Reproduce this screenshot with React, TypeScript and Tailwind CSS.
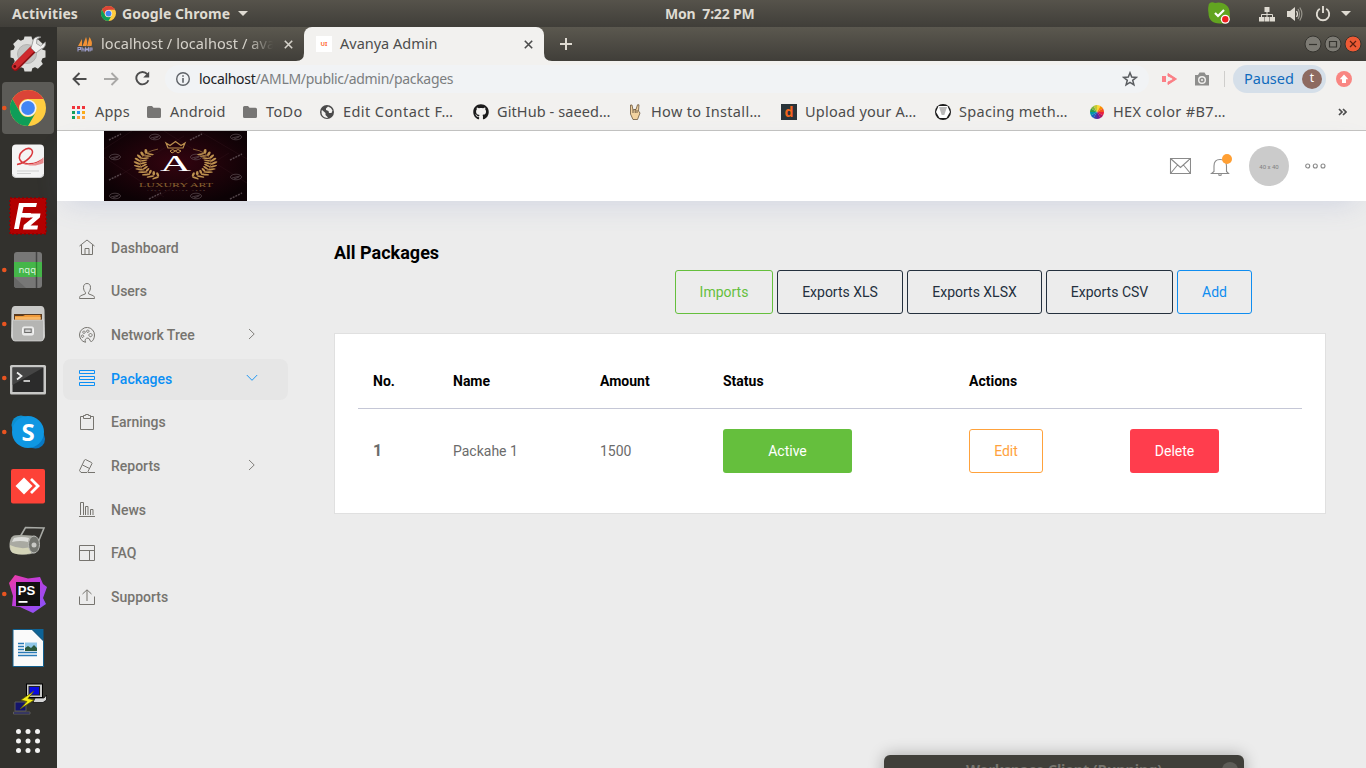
import React from "react";
import { FaGithub } from "react-icons/fa";

const UI = "font-['Noto_Sans',sans-serif]";

function ChromeLogo({ size }: { size: number }) {
  return (
    <svg width={size} height={size} viewBox="-18 -18 36 36" className="block shrink-0">
      <circle r="18" fill="#ffcd40" />
      <path d="M-15.6 -9A18 18 0 0 1 15.6 -9H0A9 9 0 0 0 -7.8 4.5Z" fill="#db4437" />
      <path d="M-15.6 -9A18 18 0 0 0 0 18L7.8 4.5A9 9 0 0 1 -7.8 4.5Z" fill="#0f9d58" />
      <circle r="8.6" fill="#f1f1f1" />
      <circle r="6.9" fill="#4285f4" />
    </svg>
  );
}

function TopBar() {
  return (
    <div className={`flex h-[27px] w-full shrink-0 items-center bg-linear-to-b from-[#56534b] to-[#403e39] text-[14px] font-bold text-[#dfdbd2] ${UI}`}>
      <span className="ml-3 w-[89px] whitespace-nowrap tracking-[0.1px]">Activities</span>
      <ChromeLogo size={15} />
      <span className="ml-1.5 w-[116px] whitespace-nowrap tracking-[0.05px]">Google Chrome</span>
      <svg width="10" height="5" viewBox="0 0 10 5"><path d="M0 0H10L5 5Z" fill="#dfdbd2" /></svg>
      <span className="ml-[417px] w-[543px] whitespace-pre tracking-[-0.200px]">Mon  7:22 PM</span>
      <svg width="22" height="23" viewBox="1208 2 22 23" className="shrink-0">
        <path d="M1208.5 6C1208.5 2.5 1212 1.5 1215 3C1222 1 1230 5 1229.7 13C1231 19 1227 24 1221 23.5C1213 24 1208.500 20 1208.500 13C1208 10 1208 8 1208.500 6Z" fill="#62a420" />
        <path d="M1215 13L1218 16L1224 10" fill="none" stroke="#fff" strokeWidth="2.200" />
        <circle cx="1225.300" cy="19.300" r="4.500" fill="#fff" />
        <circle cx="1225.300" cy="19.300" r="3.200" fill="#ef1f1f" />
      </svg>
      <svg width="16" height="16" viewBox="0 0 16 16" className="ml-[29px] shrink-0" fill="#dfdbd2">
        <path d="M5.500 1h5v5h-5zM0 11h5v4.500H0zM5.500 11h5v4.500h-5zM11 11h5v4.500h-5z" />
        <path d="M8 5V11M2.500 11V8.500H13.500V11" fill="none" stroke="#dfdbd2" />
      </svg>
      <svg width="16" height="14" viewBox="0 0 16 14" className="ml-3 shrink-0">
        <path d="M0 4H3L8 0V14L3 10H0Z" fill="#dfdbd2" />
        <path d="M9.500 4Q11.500 7 9.500 10" fill="none" stroke="#dfdbd2" strokeWidth="1.300" />
        <path d="M11 2Q14 7 11 12M12.800 .500Q17 7 12.800 13.500" fill="none" stroke="#98958c" strokeWidth="1.200" />
      </svg>
      <svg width="16" height="16" viewBox="0 0 16 16" className="ml-[12px] shrink-0">
        <path d="M4.800 2.800A6.200 6.200 0 1 0 11.200 2.800M8 0V7" fill="none" stroke="#dfdbd2" strokeWidth="1.900" />
      </svg>
      <svg width="10" height="5" viewBox="0 0 10 5" className="ml-[10px] shrink-0"><path d="M0 0H10L5 5Z" fill="#dfdbd2" /></svg>
    </div>
  );
}

function DockItem({ y, h = 54, running, children }: { y: number; h?: number; running?: boolean; children: React.ReactNode }) {
  return (
    <svg width="57" height={h} viewBox={`0 ${y} 57 ${h}`} className="block shrink-0">
      {children}
      {running && <circle cx="4.300" cy={y + 27} r="2.300" fill="#e95420" />}
    </svg>
  );
}

const teeth = [0, 45, 90, 135, 180, 225, 270, 315];
const gridDots = [0, 1, 2, 3, 4, 5, 6, 7, 8];

function Dock() {
  return (
    <div className="flex w-[57px] shrink-0 flex-col bg-[#32312d]">
      <DockItem y={27}>
        {teeth.map((a) => (
          <path key={a} d="M24.500 36.500H31.500L33.500 44H22.500Z" fill="#dededc" transform={`rotate(${a} 28 54)`} />
        ))}
        <circle cx="28" cy="54" r="15" fill="#dededc" />
        <circle cx="27" cy="54" r="9.500" fill="#c3c3c1" stroke="#b2b2b0" />
        <path d="M15.500 67L32.500 50" stroke="#8c1115" strokeWidth="7.500" strokeLinecap="round" />
        <path d="M15 66.500L32 49.500" stroke="#cf2a2e" strokeWidth="6" strokeLinecap="round" />
        <path d="M31 48L36 53L41 49Q46 48 45.500 42L40.500 46L36.500 43.500L37 39L41 37Q33 35.500 32.500 43Z" fill="#f1f1f0" stroke="#8d8d8b" strokeWidth=".8" />
        <circle cx="14.800" cy="66.500" r="1.400" fill="#5c0b0e" />
      </DockItem>
      <DockItem y={81} running>
        <rect x="2" y="82" width="52" height="52" rx="4" fill="#5c5b57" />
        <g transform="translate(28 108)">
          <circle r="18" fill="#ffcd40" />
          <path d="M-15.600 -9A18 18 0 0 1 15.600 -9H0A9 9 0 0 0 -7.800 4.500Z" fill="#db4437" />
          <path d="M-15.600 -9A18 18 0 0 0 0 18L7.800 4.500A9 9 0 0 1 -7.800 4.500Z" fill="#0f9d58" />
          <circle r="8.600" fill="#f1f1f1" />
          <circle r="6.900" fill="#4285f4" />
        </g>
      </DockItem>
      <DockItem y={135}>
        <rect x="12" y="144.500" width="32" height="33" rx="4" fill="#f4f4f4" />
        <path d="M12.500 174Q12.500 177.500 16 177.500H40Q43.500 177.500 43.500 174" stroke="#c9c9c9" fill="none" />
        <path d="M17 164.500C26 163 35.500 154 31.500 149.500C27 146 17 153 20 160C24 166.500 36 164 43 159" fill="none" stroke="#d9373c" strokeWidth="1.500" />
        <path d="M22 162.500C29 166 38 164.500 43.500 157V163C38 166 28 167 22 162.500Z" fill="#e98c8e" />
        <path d="M17 171H39M17 173.500H31" stroke="#cfcfcf" />
      </DockItem>
      <DockItem y={189}>
        <rect x="10" y="198" width="36" height="36" fill="#b30000" stroke="#8e0000" strokeWidth="1.500" strokeDasharray="2 2" />
        <path d="M19 203H37L36 207H23.500L22.200 213H31L30 217.500H21L18.800 229H14Z" fill="#fff" />
        <path d="M26 213.500H40.500L39.800 217.500L30.500 225.500H38L37.300 229.500H23L23.800 225L33 217.500H25.200Z" fill="#fff" />
      </DockItem>
      <DockItem y={243} running>
        <rect x="14" y="252" width="28" height="36" rx="3" fill="#777776" />
        <path d="M14 277L26 288H17Q14 288 14 285Z" fill="#686867" />
        <path d="M36.500 252V288" stroke="#444" strokeWidth="1.500" />
        <rect x="14" y="262" width="28" height="15" fill="#45b649" />
        <path d="M36.500 262V277" stroke="#2d8532" strokeWidth="1.300" />
        <text x="18.500" y="272.500" fontSize="9.500" fill="#d9f2da" fontFamily="Noto Sans, sans-serif">nqq</text>
      </DockItem>
      <DockItem y={297} running>
        <path d="M15 306H41Q44 306 44.500 310L45 336Q45 340 41 340H15Q11 340 11 336L11.500 310Q12 306 15 306Z" fill="#c9c9c7" />
        <rect x="14" y="314" width="28" height="7" fill="#5b3b20" />
        <path d="M15 320V316H23L25 315H40.500V320Z" fill="#f09a3a" />
        <path d="M15 318H41" stroke="#ffd08a" />
        <path d="M12.500 320H43.500V338.500Q43.500 341 41 341H15Q12.500 341 12.500 338.500Z" fill="#b5b5b3" stroke="#d9d9d8" strokeWidth=".7" />
        <rect x="22.500" y="327" width="11" height="8" rx="1.500" fill="#e4e4e3" stroke="#f4f4f4" />
        <rect x="24.700" y="329" width="6.500" height="3.500" fill="#d0d0d0" stroke="#6a6a69" />
      </DockItem>
      <DockItem y={351} running>
        <rect x="10" y="365" width="36" height="29.500" rx="1.500" fill="#c8c8c6" />
        <rect x="12.500" y="367.500" width="31" height="24.500" fill="#2b2b2b" />
        <path d="M12.500 367.500H43.500L12.500 385Z" fill="#454545" />
        <path d="M17 372.500L21.500 376L17 379.500M23.500 381H30" fill="none" stroke="#f2f2f2" strokeWidth="1.700" />
      </DockItem>
      <DockItem y={405} running>
        <circle cx="21" cy="425" r="9.500" fill="#0d8fcf" />
        <circle cx="35.500" cy="439" r="9.500" fill="#0878c4" />
        <circle cx="28" cy="432" r="16" fill="#0f97e2" />
        <text x="28" y="440.500" textAnchor="middle" fontSize="24" fontWeight="700" fill="#fff" fontFamily="Noto Sans, sans-serif">S</text>
      </DockItem>
      <DockItem y={459}>
        <rect x="11" y="469" width="34" height="34.500" rx="2" fill="#fd4237" />
        <path d="M15.500 486L24 477.500L32.500 486L24 494.500Z" fill="#fff" />
        <path d="M31 479L38 486L31 493" fill="none" stroke="#fff" strokeWidth="2.800" />
      </DockItem>
      <DockItem y={513}>
        <path d="M20 537L25.500 527.500L44 528L37 545" fill="none" stroke="#a8aaa5" strokeWidth="1.600" />
        <path d="M13 536Q16 534 35 536V553Q24 556 13 553Q9 551 9.500 544Q10 538 13 536Z" fill="#a9aaa2" />
        <path d="M10 545Q20 550 31 547V553Q22 556 13 553Q10 551 10 545Z" fill="#d4d4b8" />
        <path d="M14 538Q22 536 29 538L28 542Q20 540 12 542Z" fill="#dcddd9" />
        <ellipse cx="34" cy="544.500" rx="5.500" ry="8.500" fill="#73756f" stroke="#b9bab6" />
        <circle cx="34" cy="545" r="2.500" fill="#c8c9c5" />
      </DockItem>
      <DockItem y={567} running>
        <defs>
          <linearGradient id="psGradient" x1="0" y1="0" x2="1" y2="1">
            <stop offset="0" stopColor="#ef3da0" /><stop offset=".38" stopColor="#c53bd8" /><stop offset="1" stopColor="#8057ff" />
          </linearGradient>
        </defs>
        <path d="M15 575L28 578.500L40 577L43 584L47 587L43 598L46 604L33 613L20 607L12 606L13 596L9 583Z" fill="url(#psGradient)" />
        <rect x="16" y="582" width="24" height="24" fill="#111" />
        <text x="17.800" y="594.500" fontSize="12.500" fontWeight="700" textLength="17.500" lengthAdjust="spacingAndGlyphs" fill="#fff" fontFamily="Liberation Sans, sans-serif">PS</text>
        <rect x="18.500" y="601" width="9" height="1.800" fill="#fff" />
      </DockItem>
      <DockItem y={621}>
        <path d="M13 629.500H32L43.500 641V666.500H13Z" fill="#fafafa" stroke="#12608f" />
        <path d="M32 629H43.500V640.500Z" fill="#0d6396" />
        <path d="M18 643.500H24M18 646.500H24M18 649.500H24M18 652.500H37M18 655.500H37" stroke="#2a7bb8" strokeWidth="1.400" />
        <rect x="25" y="642.500" width="12" height="8.500" fill="#91c7e8" />
        <path d="M25 651V648L28 646L31 648L34 645L37 648V651Z" fill="#2c5a3d" />
      </DockItem>
      <DockItem y={675} h={42}>
        <path d="M15 702H26V711H15ZM13.500 712H30V714H13.500Z" fill="#14146b" stroke="#5b5b58" />
        <rect x="26.500" y="684" width="16" height="13.500" fill="#c6c6c6" stroke="#000" />
        <rect x="29" y="686.500" width="10.500" height="8.500" fill="#0a0ae0" stroke="#222" />
        <path d="M35 698H44L46.500 695V700L43 702.500H33Z" fill="#d4d4d4" stroke="#000" strokeWidth=".7" />
        <path d="M34 691L21 700L27 701.500L20 709L34 700L28 698.500Z" fill="#f5ee1a" stroke="#5e5a00" strokeWidth=".7" />
      </DockItem>
      <DockItem y={717} h={51}>
        {gridDots.map((i) => (
          <circle key={i} cx={18.500 + (i % 3) * 9.500} cy={731.500 + Math.floor(i / 3) * 9.500} r="2.500" fill="#f3f3f2" />
        ))}
      </DockItem>
    </div>
  );
}

function Cross({ color }: { color: string }) {
  return (
    <svg width="9" height="9" viewBox="0 0 9 9" className="shrink-0">
      <path d="M.800 .800L8.200 8.200M8.200 .800L.800 8.200" stroke={color} strokeWidth="1.600" />
    </svg>
  );
}

function WindowButton({ close, children }: { close?: boolean; children: React.ReactNode }) {
  return (
    <svg width="18" height="18" viewBox="0 0 18 18" className="shrink-0">
      <circle cx="9" cy="9" r="8" fill={close ? "#ee5a35" : "#7d7b74"} stroke="#35342f" />
      <g fill="none" stroke={close ? "#5b1f10" : "#35342f"} strokeWidth="1.200">{children}</g>
    </svg>
  );
}

function TabStrip() {
  return (
    <div className="flex h-[34px] shrink-0 items-stretch bg-linear-to-b from-[#5b584f] to-[#403e39] text-[14.5px]">
      <div className="flex w-[247px] shrink-0 items-center pl-5">
        <svg width="16" height="16" viewBox="0 0 16 16" className="shrink-0">
          <path d="M1 10L5 3V10ZM5.500 10L9 1Q11 6 9.500 10ZM10 10L12.500 1Q16 6 14.500 10Z" fill="#f09135" />
          <path d="M1 15.500V11.500H3.500V13.500H1M5 11V15.500M5 13H7V15.500M8.500 15.500V12L10 14L11.500 12V15.500M13 15.500V12H15V14H13" fill="none" stroke="#9b9cc8" strokeWidth="1.100" />
        </svg>
        <span className="ml-2 w-[174px] overflow-hidden whitespace-nowrap tracking-[0.080px] text-[#d5d2ca] [mask-image:linear-gradient(to_right,black_84%,transparent_99%)]">localhost / localhost / ava</span>
        <span className="ml-[9px]"><Cross color="#d5d2ca" /></span>
      </div>
      <div className="relative flex w-[240px] shrink-0 items-center rounded-t-[8px] bg-[#f2f1ef] pl-3">
        <svg width="256" height="8" viewBox="0 0 256 8" className="absolute -left-2 bottom-0">
          <path d="M0 8Q8 8 8 0V8ZM256 8Q248 8 248 0V8Z" fill="#f2f1ef" />
        </svg>
        <span className="flex size-4 shrink-0 items-center justify-center bg-white text-[6px] font-bold text-[#ff6b35]">UI</span>
        <span className="ml-2 w-[184px] whitespace-nowrap text-[#4c4c4c]">Avanya Admin</span>
        <Cross color="#4c4c4c" />
      </div>
      <div className="flex flex-1 items-center pl-4">
        <svg width="12" height="12" viewBox="0 0 12 12"><path d="M6 0V12M0 6H12" stroke="#dfdbd2" strokeWidth="2" /></svg>
        <div className="ml-auto flex gap-0.5 pr-1">
          <WindowButton><path d="M5 9.500H13" /></WindowButton>
          <WindowButton><path d="M5.500 6.500H12.500V12H5.500Z" /></WindowButton>
          <WindowButton close><path d="M6 6L12 12M12 6L6 12" /></WindowButton>
        </div>
      </div>
    </div>
  );
}

function Toolbar() {
  return (
    <div className="flex h-[35px] shrink-0 items-center bg-[#f2f1ef] pl-[15px]">
      <svg width="15" height="14" viewBox="0 0 15 14" className="shrink-0"><path d="M14.500 7H1.500M7.500 1L1.500 7L7.500 13" fill="none" stroke="#4c4c4c" strokeWidth="1.900" /></svg>
      <svg width="15" height="14" viewBox="0 0 15 14" className="ml-[17px] shrink-0"><path d="M0 7H13.500M7.500 1L13.500 7L7.500 13" fill="none" stroke="#a9a8a6" strokeWidth="1.900" /></svg>
      <svg width="15" height="15" viewBox="0 0 15 15" className="ml-[16px] shrink-0">
        <path d="M12.300 3.200A6.200 6.200 0 1 0 13.400 9.200" fill="none" stroke="#4c4c4c" strokeWidth="1.900" />
        <path d="M14.200 .500V6.500H8.200Z" fill="#4c4c4c" />
      </svg>
      <div className="ml-[15px] flex h-7 w-[984px] shrink-0 items-center rounded-full bg-[#f1f3f5] pl-[11px] pr-[11px]">
        <svg width="14" height="14" viewBox="0 0 14 14"><circle cx="7" cy="7" r="6.300" fill="none" stroke="#5f6368" strokeWidth="1.400" /><path d="M7 3.200V4.800M7 6V10.800" stroke="#5f6368" strokeWidth="1.600" /></svg>
        <span className="ml-[9px] whitespace-nowrap text-[14px] tracking-[-0.3px] text-[#7b7e80]"><span className="text-[#202124]">localhost</span>/AMLM/public/admin/packages</span>
        <svg width="16" height="16" viewBox="0 0 16 16" className="ml-auto"><path d="M8 1.800L9.700 6.100L14.300 6.400L10.700 9.300L11.900 13.800L8 11.300L4.100 13.800L5.300 9.300L1.700 6.400L6.300 6.100Z" fill="none" stroke="#5a5d61" strokeWidth="1.500" /></svg>
      </div>
      <svg width="16" height="14" viewBox="0 0 16 14" className="ml-[13px] shrink-0">
        <path d="M0 4H4V10H0Z" fill="#fb7f85" />
        <path d="M6 1.500L14.500 7L6 12.500V10L11 7.500V6.500L6 4Z" fill="#fb7f85" stroke="#fb7f85" strokeLinejoin="round" />
        <path d="M4 5.500H8L10 7L8 8.500H4Z" fill="#f2f1ef" />
      </svg>
      <svg width="16" height="14" viewBox="0 0 16 14" className="ml-4 shrink-0">
        <path d="M1 3H4L5.500 .500H10.500L12 3H15V13.500H1Z" fill="#8e8e8c" />
        <circle cx="8" cy="8" r="4" fill="#f2f1ef" /><circle cx="8" cy="8" r="2.600" fill="#8e8e8c" />
        <circle cx="8" cy="8" r="1" fill="#f2f1ef" />
      </svg>
      <span className="ml-[14px] h-4 w-px bg-[#cfcecc]" />
      <div className="ml-2 flex h-7 w-[93px] shrink-0 items-center rounded-full bg-[#d5dfe9] pl-[11px] text-[14.5px] text-[#0f6bbd]">
        <span className="w-[58px]">Paused</span>
        <span className="flex size-5 items-center justify-center rounded-full bg-[#8d6a60] pb-px text-[12px] text-white">t</span>
      </div>
      <svg width="16" height="16" viewBox="0 0 16 16" className="ml-[10px] shrink-0">
        <circle cx="8" cy="8" r="8" fill="#f98682" />
        <path d="M8 3.500L12.300 8.300H10V12H6V8.300H3.700Z" fill="#fff" />
      </svg>
    </div>
  );
}

function Folder() {
  return <svg width="14" height="12" viewBox="0 0 14 12"><path d="M0 1.500Q0 0 1.500 0H5L6.500 1.800H12.500Q14 1.800 14 3.300V10.500Q14 12 12.500 12H1.500Q0 12 0 10.500Z" fill="#777674" /></svg>;
}

const appColors = ["#f1343a", "#f1343a", "#f1343a", "#12a05c", "#2196f3", "#fbab16", "#12a05c", "#fba13a", "#fba13a"];
const wheelColors = ["#fdd835", "#fb8c00", "#f4511e", "#e91e3f", "#b0155f", "#6a1b9a", "#3f3fa5", "#1565c0", "#0097a7", "#2e9e44", "#7cb342", "#c0ca33"];

const bookmarks = [
  {
    w: "w-[75px]", iw: "w-[23px]", t: "Apps", ls: "tracking-[0.2px]",
    icon: <svg width="13" height="13" viewBox="0 0 13 13">{appColors.map((c, i) => <rect key={i} x={(i % 3) * 5} y={Math.floor(i / 3) * 5} width="3" height="3" fill={c} />)}</svg>,
  },
  { w: "w-[96px]", iw: "w-[23px]", t: "Android", ls: "tracking-[0.2px]", icon: <Folder /> },
  { w: "w-[77px]", iw: "w-[23px]", t: "ToDo", ls: "tracking-[0.4px]", icon: <Folder /> },
  {
    w: "w-[153px]", iw: "w-[23px]", t: "Edit Contact F…", ls: "tracking-[0.42px]",
    icon: <svg width="14" height="14" viewBox="0 0 14 14"><circle cx="7" cy="7" r="7" fill="#4a4a4a" /><path d="M2 5L5.500 8V10L8 12.500L7 13Q1 12 1.500 6ZM8 1.500L6 3.500V5L8.500 6L9 8H11.500L12.500 5.500Q11.500 2.500 8 1.500Z" fill="#f2f1ef" /></svg>,
  },
  { w: "w-[156px]", iw: "w-[24px]", t: "GitHub - saeed…", ls: "tracking-[0.1px]", icon: <FaGithub size={16} color="#1b1b1b" /> },
  {
    w: "w-[152px]", iw: "w-[22px]", t: "How to Install…", ls: "tracking-[0.33px]",
    icon: <svg width="12" height="16" viewBox="0 0 12 16"><path d="M1.500 1H3L4 6L5 5.500H7L8.500 .800H10L9.500 7L11 9L8.500 15.500H4L1.500 10Z" fill="#f3d3a0" stroke="#6b563b" strokeWidth=".8" /><path d="M4 6V9M6.200 5.500V9M8 6V9" stroke="#4f3d28" strokeWidth=".8" fill="none" /></svg>,
  },
  {
    w: "w-[154px]", iw: "w-[24px]", t: "Upload your A…", ls: "tracking-[0.22px]",
    icon: <span className="flex size-4 items-center justify-center bg-[#2a3439] pb-0.5 text-[14px] font-bold text-[#f4661e]">d</span>,
  },
  {
    w: "w-[155px]", iw: "w-[24px]", t: "Spacing meth…", ls: "tracking-[0.3px]",
    icon: <svg width="16" height="16" viewBox="0 0 16 16"><circle cx="8" cy="8" r="8" fill="#1c1c1c" /><path d="M3.500 2H12.500L15 8L11.500 14H4.500L1 8Z" fill="#fff" /><path d="M4 3H12L9.300 11H6.700Z" fill="#b9b9b9" /></svg>,
  },
  {
    w: "w-[248px]", iw: "w-[23px]", t: "HEX color #B7…", ls: "tracking-[0.37px]",
    icon: (
      <svg width="14" height="14" viewBox="-7 -7 14 14">
        {wheelColors.map((c, i) => <path key={i} d="M0 0V-7A7 7 0 0 1 3.600 -6Z" fill={c} transform={`rotate(${i * 30})`} />)}
      </svg>
    ),
  },
];

function Bookmarks() {
  return (
    <div className="flex h-[35px] shrink-0 items-center border-b border-[#c4c3c1] bg-[#f2f1ef] pb-0.5 pl-[15px] text-[14.5px] text-[#4c4c4c]">
      {bookmarks.map((b) => (
        <div key={b.t} className={`flex shrink-0 items-center ${b.w}`}>
          <span className={`flex shrink-0 items-center ${b.iw}`}>{b.icon}</span>
          <span className={`whitespace-nowrap ${b.ls}`}>{b.t}</span>
        </div>
      ))}
      <svg width="9" height="8" viewBox="0 0 9 8"><path d="M1 1L4 4L1 7M5 1L8 4L5 7" fill="none" stroke="#4c4c4c" strokeWidth="1.700" /></svg>
    </div>
  );
}

const leafAngles = [-72, -60, -48, -36, -24, -12, 0, 12, 24, 36, 48];

function Wreath() {
  return (
    <g fill="#bd914f">
      <path d="M-6 -24A25 25 0 0 0 -14 20" fill="none" stroke="#bd914f" strokeWidth=".8" />
      {leafAngles.map((a) => (
        <g key={a} transform={`rotate(${a})`}>
          <ellipse cx="-27" cy="0" rx="4" ry="1.500" transform="rotate(38 -27 0)" />
          <ellipse cx="-20.500" cy="0" rx="3.800" ry="1.300" transform="rotate(-30 -20.500 0)" />
        </g>
      ))}
    </g>
  );
}

function Logo() {
  return (
    <svg width="143" height="70" viewBox="0 0 143 70" className="ml-[47px] block">
      <defs>
        <radialGradient id="logoGlow" cx=".5" cy=".45" r=".6"><stop offset="0" stopColor="#33040f" /><stop offset="1" stopColor="#0c0205" /></radialGradient>
      </defs>
      <rect width="143" height="70" fill="url(#logoGlow)" />
      <path d="M0 18L28 0M10 48L80 5M50 68L125 22M0 26L60 66M60 0L143 52M95 0L143 28" stroke="#43202b" strokeWidth=".5" opacity=".5" />
      <g fill="none" stroke="#6d5f64" strokeWidth=".8" opacity=".7">
        {[[51, 6], [132, 6], [11, 26], [92, 26], [132, 46], [11, 65], [92, 65]].map(([x, y]) => (
          <g key={`${x}-${y}`}><ellipse cx={x} cy={y} rx="5.500" ry="2.800" /><path d={`M${x - 4} ${y + 1}L${x + 4} ${y - 1}M${x - 2} ${y + 2}L${x + 3} ${y}`} /></g>
        ))}
        {[[11, 6], [92, 6], [132, 26], [11, 46], [51, 65], [132, 65]].map(([x, y]) => (
          <path key={`${x}-${y}`} d={`M${x - 6} ${y + 3}L${x + 6} ${y - 3}`} strokeDasharray="2 1" strokeWidth="1.500" />
        ))}
      </g>
      <g transform="translate(60 32) scale(1 .580)"><Wreath /></g>
      <g transform="translate(83 32) scale(-1 .580)"><Wreath /></g>
      <path d="M62 12L66 14.500L71.500 10.500L77 14.500L81 12L79 17H64Z" fill="none" stroke="#bd914f" strokeWidth="1.200" />
      <path d="M66 20Q69 17 71 20Q74 17 77 20L74 22L71.500 20L68 22Z" fill="none" stroke="#bd914f" />
      <text x="71.500" y="39.500" textAnchor="middle" fontSize="22.500" textLength="31" lengthAdjust="spacingAndGlyphs" fill="#fff" fontFamily="Liberation Serif, serif">A</text>
      <text x="35" y="55.500" fontSize="6.500" textLength="74" lengthAdjust="spacingAndGlyphs" fill="#8a6230" fontFamily="Liberation Serif, serif">LUXURY ART</text>
      <text x="43" y="60" fontSize="2.500" textLength="58" fill="#6f5b50" fontFamily="Liberation Sans, sans-serif">YOUR TAGLINE HERE</text>
    </svg>
  );
}

function Header() {
  return (
    <div className="z-10 flex h-[70px] shrink-0 items-center bg-white pr-10 shadow-[0_10px_30px_-10px_rgba(100,120,190,0.24)]">
      <Logo />
      <svg width="22" height="16" viewBox="0 0 22 16" className="ml-auto">
        <path d="M1.500 .500H21.500V15.500H1.500ZM1.500 .500L11.500 9.500L21.500 .500M1.500 15.500L8.500 7M21.500 15.500L14.500 7" fill="none" stroke="#8a8a8a" strokeWidth="1.100" />
      </svg>
      <div className="relative ml-[19px] size-[20px]">
        <svg width="20" height="20" viewBox="0 0 20 20" className="relative top-px">
          <path d="M1.500 16.500H18.500L16.500 14.500V9Q16.500 2.500 10 2.500Q4 2.500 4 9V14.500L1.500 16.500ZM8.300 17.500Q10 19.200 11.700 17.500" fill="none" stroke="#8a8a8a" strokeWidth="1.100" />
        </svg>
        <span className="absolute -top-0.5 left-3 size-2.5 rounded-full bg-[#ff9f33]" />
      </div>
      <span className="ml-[19px] flex size-10 items-center justify-center rounded-full bg-[#cbcbcb] text-[6px] text-[#808080]">40 x 40</span>
      <svg width="21" height="6" viewBox="0 0 21 6" className="ml-4">
        <g fill="none" stroke="#8a8a8a" strokeWidth="1.100"><circle cx="2.700" cy="3" r="2" /><circle cx="10.300" cy="3" r="2" /><circle cx="18" cy="3" r="2" /></g>
      </svg>
    </div>
  );
}

const nav = [
  { t: "Dashboard", d: "M.5 7L8 1L15.500 7M2.500 6V15.500H13.500V6M6 15.500V9.500H10V15.500" },
  { t: "Users", d: "M8 .5C5.800 .5 4.500 2 4.500 4.300C4.500 6.800 5.400 8.300 6.400 9.300V10.900L2 12.600C1 13 .5 13.800 .5 15.500H15.500C15.500 13.800 15 13 14 12.600L9.600 10.900V9.300C10.600 8.300 11.500 6.800 11.500 4.300C11.500 2 10.200 .5 8 .5Z" },
  { t: "Network Tree", arrow: true, d: "M6.500 15.300A7.500 7.500 0 1 1 15.500 8C15.500 11 14 14 12.500 14.500C10.500 15 11.500 11.500 9 11C6.500 11 5.500 13 6.500 15.300ZM3.500 8A1.200 1.200 0 1 0 3.510 8ZM5 4A1.200 1.200 0 1 0 5.010 4ZM8.800 3A1.200 1.200 0 1 0 8.810 3ZM11.500 6.500A1.600 1.600 0 1 0 11.510 6.500Z" },
  { t: "Packages", active: true, arrow: true, d: "M.5 .5H15.500V3.500H.5ZM.5 6.500H15.500V9.500H.5ZM.5 12.500H15.500V15.500H.5Z" },
  { t: "Earnings", d: "M4.500 2.500H1.500V15.500H14.500V2.500H11.500M4.500 1.500H6.500V.5H9.500V1.500H11.500V4.500H4.500Z" },
  { t: "Reports", arrow: true, d: "M6.500 1.500L12.500 4.500L13 5.500L9 13.500L8 14.500H2L.5 12.500L5.500 2ZM3.500 7L10.500 10.500M9 14.500H16" },
  { t: "News", d: "M0 15.500H16M1.500 14V1.500H4.500V14M6.500 14V5.500H9V14M11.500 14V8.500H14V14" },
  { t: "FAQ", d: "M.5 .5H15.500V15.500H.5ZM.5 5.500H15.500M10.500 5.500V15.500" },
  { t: "Supports", d: "M.5 7.500V15.500H15.500V7.500M8 12V1M3.500 5L8 .800L12.500 5" },
];

function Sidebar() {
  return (
    <nav className="flex w-[231px] shrink-0 flex-col pt-[25.400px] pl-1.5">
      {nav.map((n) => (
        <div key={n.t} className="flex h-[43.650px] items-center">
          <div className={`flex h-[41px] w-full items-center rounded-[8px] pl-4 text-[14px] font-medium ${n.active ? "bg-[#e6e6e6] text-[#0a8ff5]" : "text-[#76746f]"}`}>
            <svg width="16" height="16" viewBox="0 0 16 16" className="mb-[1.500px] shrink-0" fill="none" stroke="currentColor" strokeWidth="1"><path d={n.d} /></svg>
            <span className="ml-4 w-[135px] whitespace-nowrap">{n.t}</span>
            {n.arrow && (
              <svg width="12" height="12" viewBox="0 0 12 12" className="mb-0.5" fill="none" stroke="currentColor" strokeWidth=".9">
                <path d={n.active ? "M.8 3L6 8.300L11.200 3" : "M3 1L8.200 6L3 11"} />
              </svg>
            )}
          </div>
        </div>
      ))}
    </nav>
  );
}

const buttons = [
  { t: "Imports", c: "w-[98px] border-[#65bf3d] text-[#65bf3d]" },
  { t: "Exports XLS", c: "w-[126px] border-[#24303e] text-[#24303e]" },
  { t: "Exports XLSX", c: "w-[135px] border-[#24303e] text-[#24303e]" },
  { t: "Exports CSV", c: "w-[127px] border-[#24303e] text-[#24303e]" },
  { t: "Add", c: "w-[75px] border-[#0f8df0] text-[#0f8df0]" },
];
const cols = "grid grid-cols-[80px_147px_123px_246px_161px_1fr] pl-[15px] items-center";

function Main() {
  return (
    <main className="flex-1 pt-10 pr-10 pl-[46px]">
      <h1 className="h-[29px] text-[18px] leading-6 font-bold text-black">All Packages</h1>
      <div className="flex gap-1 pl-[341px]">
        {buttons.map((b) => (
          <button key={b.t} className={`h-11 shrink-0 rounded-[3px] border text-[14px] whitespace-nowrap ${b.c}`}>{b.t}</button>
        ))}
      </div>
      <section className="mt-[19px] h-[181px] border border-[#e0e0e0] bg-white px-[23px] pt-[19px] text-[14px]">
        <div className={`${cols} h-14 border-b border-[#c5c7d6] pt-0.5 font-bold text-black`}>
          <span>No.</span><span>Name</span><span>Amount</span><span>Status</span><span>Actions</span>
        </div>
        <div className={`${cols} h-[84px] text-[#6b6b6b]`}>
          <span className="text-[16px] font-bold">1</span><span>Packahe 1</span><span>1500</span>
          <button className="h-11 w-[129px] rounded-[3px] bg-[#65bf3d] text-white">Active</button>
          <button className="h-11 w-[74px] rounded-[3px] border border-[#ffa23c] text-[#ffa23c]">Edit</button>
          <button className="h-11 w-[89px] rounded-[3px] bg-[#ff3d4d] text-white">Delete</button>
        </div>
      </section>
    </main>
  );
}

export default function App() {
  return (
    <div className={`relative flex h-[768px] w-[1366px] flex-col overflow-hidden ${UI}`}>
      <TopBar />
      <div className="flex min-h-0 flex-1">
        <Dock />
        <div className="flex min-w-0 flex-1 flex-col">
          <TabStrip />
          <Toolbar />
          <Bookmarks />
          <div className="flex min-h-0 flex-1 flex-col bg-[#ececec] font-[Roboto,sans-serif]">
            <Header />
            <div className="flex min-h-0 flex-1">
              <Sidebar />
              <Main />
            </div>
          </div>
        </div>
      </div>
      <div className="absolute top-[755px] left-[884px] z-20 flex h-8 w-[360px] justify-center rounded-t-[6px] bg-[#403f3a] pt-1 text-[14.5px] font-bold tracking-[-0.15px] text-[#77756f] shadow-[0_0_16px_rgba(0,0,0,0.3)]">
        <span className="whitespace-nowrap">Workspace Client (Running)</span>
        <span className="absolute top-[7px] right-1.5 size-4 rounded-full bg-[#5e5d58]" />
      </div>
    </div>
  );
}
